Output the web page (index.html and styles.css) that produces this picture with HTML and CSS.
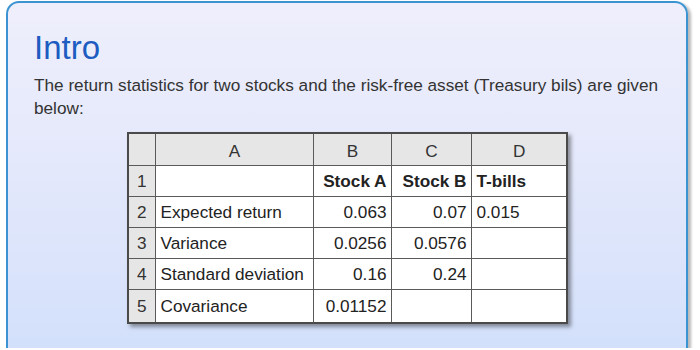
FILE: index.html
```html
<!DOCTYPE html>
<html>
<head>
<meta charset="utf-8">
<link rel="stylesheet" href="styles.css">
</head>
<body>
<div class="panel">
  <h1 class="title">Intro</h1>
  <p class="lead">The return statistics for two stocks and the risk-free asset (Treasury bils) are given below:</p>
  <table class="sheet">
    <colgroup>
      <col class="c-rn"><col class="c-a"><col class="c-b"><col class="c-c"><col class="c-d">
    </colgroup>
    <tr class="hdr">
      <th class="corner"></th><th>A</th><th>B</th><th>C</th><th>D</th>
    </tr>
    <tr>
      <td class="rn">1</td><td></td><td class="num bold">Stock A</td><td class="num bold">Stock B</td><td class="bold">T-bills</td>
    </tr>
    <tr>
      <td class="rn">2</td><td>Expected return</td><td class="num">0.063</td><td class="num">0.07</td><td>0.015</td>
    </tr>
    <tr>
      <td class="rn">3</td><td>Variance</td><td class="num">0.0256</td><td class="num">0.0576</td><td></td>
    </tr>
    <tr>
      <td class="rn">4</td><td>Standard deviation</td><td class="num">0.16</td><td class="num">0.24</td><td></td>
    </tr>
    <tr class="last">
      <td class="rn">5</td><td>Covariance</td><td class="num">0.01152</td><td></td><td></td>
    </tr>
  </table>
</div>
</body>
</html>
```

FILE: styles.css
```css
html, body {
  margin: 0;
  padding: 0;
  background: #ffffff;
  overflow: hidden;
}

body {
  font-family: "Liberation Sans", Arial, sans-serif;
}

.panel {
  box-sizing: border-box;
  margin: 1px 0 0 6px;
  width: 682px;
  height: 347px;
  border: 2px solid #3b93d1;
  border-bottom: none;
  border-radius: 13px 13px 0 0;
  background: linear-gradient(to bottom, #efeffc 0%, #e3e8fb 50%, #d3e0fb 100%);
  box-shadow: 3px 2px 3px rgba(0, 0, 0, 0.28);
  padding: 28px 0 0 26px;
}

.title {
  margin: 0;
  font-size: 33px;
  line-height: 34px;
  font-weight: normal;
  color: #1d5cc0;
}

.lead {
  margin: 9px 0 0 0;
  font-size: 17.2px;
  line-height: 23px;
  color: #333333;
  width: 640px;
}

.sheet {
  margin: 12px 0 0 93px;
  border-collapse: collapse;
  table-layout: fixed;
  width: 440px;
  background: #ffffff;
  border: 2px solid #4a4a4a;
  box-shadow: 3px 3px 4px rgba(0, 0, 0, 0.4);
  font-size: 17.2px;
  color: #222222;
}

.c-rn { width: 27px; }
.c-a { width: 158px; }
.c-b { width: 78px; }
.c-c { width: 80px; }
.c-d { width: 96px; }

.sheet th,
.sheet td {
  border: 1px solid #5a5a5a;
  padding: 0 4px 0 5px;
  height: 30px;
  white-space: nowrap;
  overflow: hidden;
  text-align: left;
}

.sheet .hdr th {
  background: #e6e6e6;
  font-weight: normal;
  text-align: center;
  color: #333333;
  height: 28px;
  padding-top: 3px;
}

.sheet .rn {
  background: #e6e6e6;
  text-align: center;
  padding: 0;
  color: #333333;
}

.sheet .num {
  text-align: right;
}

.sheet .bold {
  font-weight: bold;
}

.sheet .last td {
  height: 32px;
}
```
